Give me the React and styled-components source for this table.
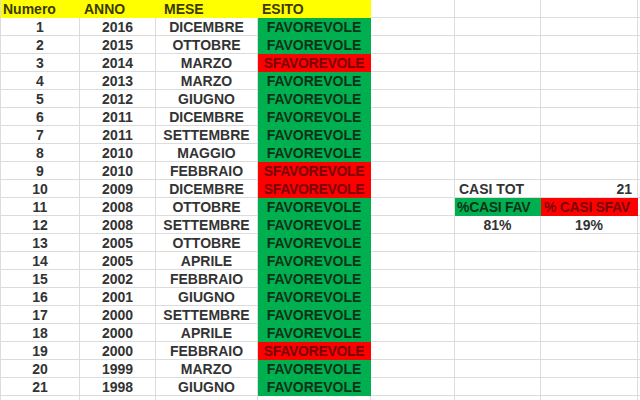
import React from 'react'
import styled, { createGlobalStyle } from 'styled-components'

const Global = createGlobalStyle`
  html, body { margin: 0; padding: 0; background: #fff; }
  #root { width: 640px; height: 400px; overflow: hidden; }
`

const COLS = '79px 76px 102px 113px 84px 86px 97px 1fr';

const Sheet = styled.div`
  width: 640px;
  height: 400px;
  overflow: hidden;
  display: grid;
  grid-template-columns: ${COLS};
  grid-auto-rows: 18px;
  border-left: 1px solid #dcdcdc;
  box-sizing: border-box;
  font-family: "Liberation Sans", Arial, sans-serif;
  font-size: 14px;
  font-weight: bold;
  color: #333;
`

const fills = {
  yellow: { bg: '#ffff00', fg: '#3b3a00' },
  green: { bg: '#00b050', fg: '#0d3318' },
  red: { bg: '#ff0000', fg: '#7a0606' },
}

const Cell = styled.div`
  box-sizing: border-box;
  border-right: 1px solid ${p => (p.$fill ? fills[p.$fill].bg : '#dcdcdc')};
  border-bottom: 1px solid ${p => (p.$fill ? fills[p.$fill].bg : '#dcdcdc')};
  background: ${p => (p.$fill ? fills[p.$fill].bg : '#fff')};
  color: ${p => (p.$fill ? fills[p.$fill].fg : 'inherit')};
  display: flex;
  align-items: center;
  justify-content: ${p => (p.$align === 'left' ? 'flex-start' : p.$align === 'right' ? 'flex-end' : 'center')};
  padding: 0 ${p => (p.$pad != null ? p.$pad : 4)}px;
  white-space: nowrap;
  overflow: hidden;
  line-height: 1;
  letter-spacing: ${p => (p.$tight ? '-0.3px' : '0')};
`

const rows = [
  [2016, 'DICEMBRE', 1],
  [2015, 'OTTOBRE', 1],
  [2014, 'MARZO', 0],
  [2013, 'MARZO', 1],
  [2012, 'GIUGNO', 1],
  [2011, 'DICEMBRE', 1],
  [2011, 'SETTEMBRE', 1],
  [2010, 'MAGGIO', 1],
  [2010, 'FEBBRAIO', 0],
  [2009, 'DICEMBRE', 0],
  [2008, 'OTTOBRE', 1],
  [2008, 'SETTEMBRE', 1],
  [2005, 'OTTOBRE', 1],
  [2005, 'APRILE', 1],
  [2002, 'FEBBRAIO', 1],
  [2001, 'GIUGNO', 1],
  [2000, 'SETTEMBRE', 1],
  [2000, 'APRILE', 1],
  [2000, 'FEBBRAIO', 0],
  [1999, 'MARZO', 1],
  [1998, 'GIUGNO', 1],
  null,
]

// side summary, keyed by row index (1-based data rows)
const side = {
  10: [<Cell key="f" $align="left">CASI TOT</Cell>, <Cell key="g" $align="right" $pad={5}>21</Cell>],
  11: [
    <Cell key="f" $fill="green" $align="left" $pad={2} $tight>%CASI FAV</Cell>,
    <Cell key="g" $fill="red" $align="left" $pad={3} $tight>% CASI SFAV</Cell>,
  ],
  12: [<Cell key="f">81%</Cell>, <Cell key="g">19%</Cell>],
}

export default function App() {
  return (
    <>
      <Global />
      <Sheet>
        <Cell $fill="yellow" $align="left" $pad={2}>Numero</Cell>
        <Cell $fill="yellow" $align="left">ANNO</Cell>
        <Cell $fill="yellow" $align="left" $pad={8}>MESE</Cell>
        <Cell $fill="yellow" $align="left">ESITO</Cell>
        <Cell /><Cell /><Cell /><Cell />
        {rows.map((r, i) => {
          const n = i + 1
          const extra = side[n] || [<Cell key="f" />, <Cell key="g" />]
          if (!r) {
            return (
              <React.Fragment key={n}>
                <Cell /><Cell /><Cell /><Cell /><Cell />{extra}<Cell />
              </React.Fragment>
            )
          }
          const [year, month, ok] = r
          return (
            <React.Fragment key={n}>
              <Cell>{n}</Cell>
              <Cell>{year}</Cell>
              <Cell>{month}</Cell>
              <Cell $fill={ok ? 'green' : 'red'} $pad={1} $tight={!ok}>
                {ok ? 'FAVOREVOLE' : 'SFAVOREVOLE'}
              </Cell>
              <Cell />
              {extra}
              <Cell />
            </React.Fragment>
          )
        })}
      </Sheet>
    </>
  )
}
